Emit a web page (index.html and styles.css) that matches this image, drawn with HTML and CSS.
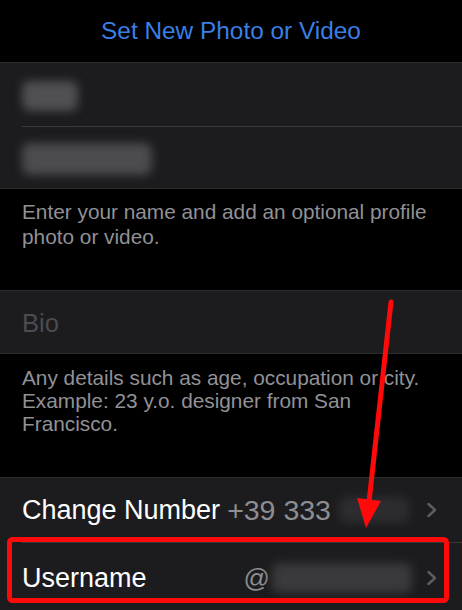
FILE: index.html
```html
<!DOCTYPE html>
<html lang="en">
<head>
<meta charset="utf-8">
<title>Edit Profile</title>
<link rel="stylesheet" href="styles.css">
</head>
<body>
<div class="screen">
  <div class="header">Set New Photo or Video</div>

  <div class="group group-name">
    <div class="row row-first"><span class="blur blur-first"></span></div>
    <div class="sep"></div>
    <div class="row row-last"><span class="blur blur-last"></span></div>
  </div>
  <div class="note note-name">Enter your name and add an optional profile photo or video.</div>

  <div class="group group-bio">
    <div class="row row-bio"><span class="placeholder">Bio</span></div>
  </div>
  <div class="note note-bio">Any details such as age, occupation or city. Example: 23 y.o. designer from San Francisco.</div>

  <div class="group group-account">
    <div class="row row-nav">
      <span class="label">Change Number</span>
      <span class="value">+39 333</span>
      <span class="blur blur-phone"></span>
      <svg class="chev" width="12" height="16" viewBox="0 0 12 16"><polyline points="2.5,2 9,8 2.5,14" fill="none" stroke="#5d5d62" stroke-width="2.4" stroke-linecap="round" stroke-linejoin="round"/></svg>
    </div>
    <div class="sep sep-full"></div>
    <div class="row row-nav row-user">
      <span class="label">Username</span>
      <span class="value value-at">@</span>
      <span class="blur blur-user"></span>
      <svg class="chev" width="12" height="16" viewBox="0 0 12 16"><polyline points="2.5,2 9,8 2.5,14" fill="none" stroke="#5d5d62" stroke-width="2.4" stroke-linecap="round" stroke-linejoin="round"/></svg>
    </div>
  </div>

  <svg class="annot" width="462" height="610" viewBox="0 0 462 610">
    <line x1="391" y1="302" x2="369" y2="502" stroke="#ff0a0a" stroke-width="5" stroke-linecap="round"/>
    <polygon points="357,498 381,501 366,528" fill="#ff0a0a"/>
    <rect x="9.5" y="539.5" width="437" height="61" rx="3" fill="none" stroke="#ff0a0a" stroke-width="5"/>
  </svg>
</div>
</body>
</html>
```

FILE: styles.css
```css
html, body {
  margin: 0;
  padding: 0;
  background: #000;
}

.screen {
  position: relative;
  width: 462px;
  height: 610px;
  overflow: hidden;
  background: #000;
  font-family: "Liberation Sans", Arial, sans-serif;
  color: #fff;
}

.header {
  height: 62px;
  display: flex;
  align-items: center;
  justify-content: center;
  font-size: 24.4px;
  color: #3a7fe6;
}

.group {
  background: #1c1c1e;
  border-top: 1px solid #2c2c2f;
  border-bottom: 1px solid #2c2c2f;
}

.row {
  display: flex;
  align-items: center;
  padding: 0 24px 0 22px;
}

.row-first { height: 63px; }
.row-last { height: 61px; }
.row-bio { height: 62px; }

.sep {
  height: 1px;
  margin-left: 22px;
  background: #38383b;
}

.blur {
  display: block;
  border-radius: 8px;
  filter: blur(5px);
}

.blur-first {
  width: 56px;
  height: 30px;
  background: #505052;
  margin-top: 2px;
}

.blur-last {
  width: 130px;
  height: 32px;
  background: #4c4c4e;
  margin-top: 2px;
}

.blur-phone {
  width: 70px;
  height: 26px;
  background: #2d2d30;
  margin-left: 8px;
}

.blur-user {
  width: 140px;
  height: 30px;
  background: #3a3a3d;
  margin-left: 2px;
}

.note {
  padding: 0 22px;
  font-size: 20.8px;
  color: #919196;
  box-sizing: border-box;
}

.note-name {
  height: 101px;
  padding-top: 10px;
  line-height: 25px;
}

.note-bio {
  height: 123px;
  padding-top: 12px;
  line-height: 23px;
}

.placeholder {
  font-size: 25.6px;
  color: #4b4b4f;
  margin-top: 2px;
}

.group-account {
  border-bottom: none;
  height: 140px;
}

.row-nav {
  height: 64px;
  font-size: 27px;
}

.row-user {
  height: 66px;
  padding-top: 4px;
  box-sizing: border-box;
}

.label {
  color: #fff;
}

.value {
  color: #8d8d92;
  margin-left: 7px;
  font-size: 28.5px;
}

.value-at {
  margin-left: auto;
  font-size: 26px;
}

.chev {
  margin-left: auto;
  display: block;
}

.row-user .chev {
  margin-left: 14px;
}

.annot {
  position: absolute;
  left: 0;
  top: 0;
  pointer-events: none;
}
```
